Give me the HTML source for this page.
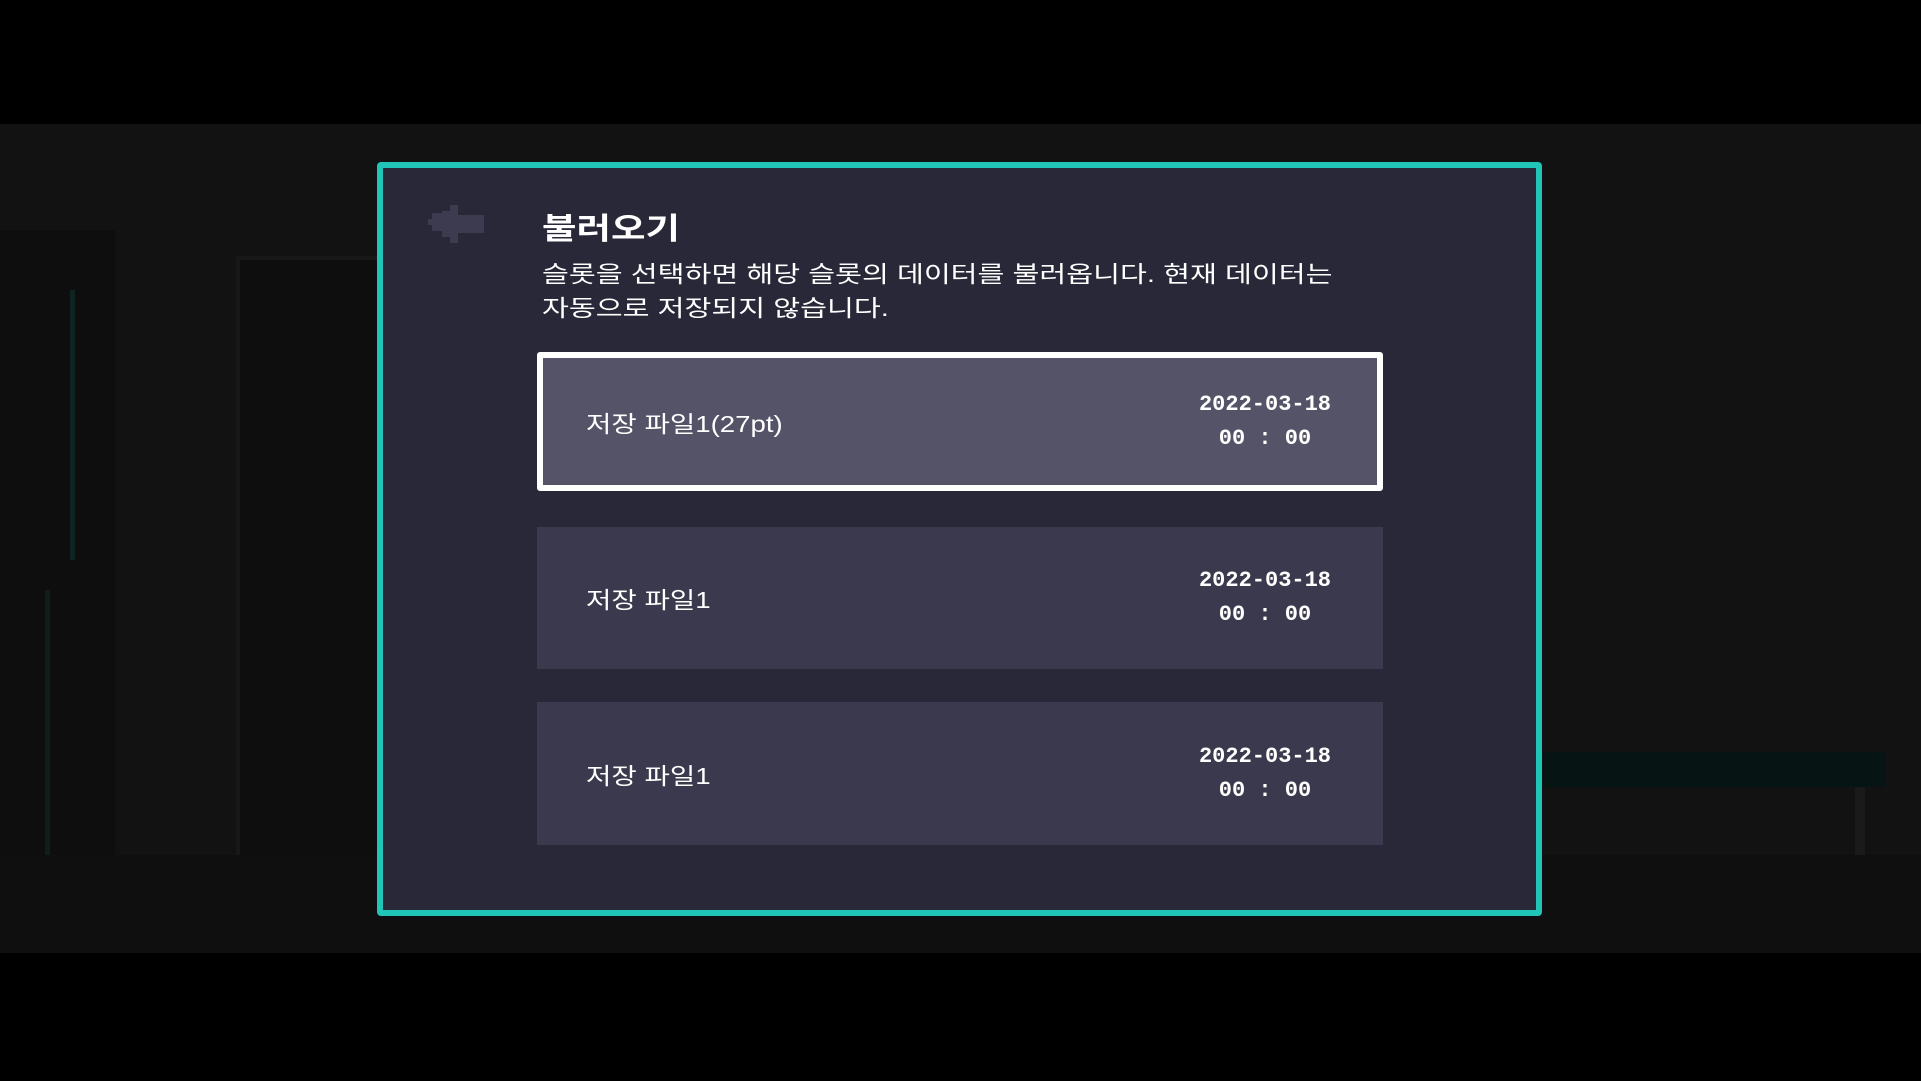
<!DOCTYPE html>
<html><head><meta charset="utf-8"><style>
*{margin:0;padding:0;box-sizing:border-box}
body{width:1921px;height:1081px;background:#000;position:relative;overflow:hidden;font-family:"Liberation Sans","Noto Sans CJK KR",sans-serif;color:#fff}
.a{position:absolute}
.sx{transform-origin:0 0;white-space:nowrap}
.slot{position:absolute;left:537px;width:846px;background:#3b394d}
.slot .n{position:absolute;left:49px;font-size:23px;top:50%;transform:translateY(-50%) scaleX(1.2);transform-origin:0 50%;white-space:nowrap}
.slot .d{position:absolute;left:638px;width:180px;text-align:center;font-size:22px;line-height:34px;top:50%;transform:translateY(-50%);font-family:"Liberation Mono","Noto Sans CJK KR",monospace;font-weight:bold;white-space:nowrap}
</style></head><body>
<div class="a" style="left:0;top:124px;width:1921px;height:829px;background:#121212"></div>
<div class="a" style="left:0;top:230px;width:115px;height:690px;background:#0e0e0e"></div>
<div class="a" style="left:70px;top:290px;width:5px;height:270px;background:#0d2420"></div>
<div class="a" style="left:45px;top:590px;width:5px;height:320px;background:#0d1f1c"></div>
<div class="a" style="left:236px;top:256px;width:150px;height:620px;background:#0e0e0e;border:4px solid #181818"></div>
<div class="a" style="left:1540px;top:752px;width:345px;height:35px;background:#061414"></div>
<div class="a" style="left:1855px;top:787px;width:10px;height:80px;background:#1a1a1a"></div>
<div class="a" style="left:0;top:855px;width:1921px;height:98px;background:#0f0f0f"></div>
<div class="a" style="left:377px;top:162px;width:1165px;height:754px;background:#282838;border:6px solid #20c5b8;border-radius:4px"></div>
<svg class="a" style="left:428px;top:205px" width="58" height="38" viewBox="0 0 58 38"><path d="M22 0h8v10h26v18H30v10h-8v-6h-8v-6H4v-6H0v-6h4v-6h10V6h8z" fill="#3d3b50"/></svg>
<div class="a sx" style="left:542px;top:204px;font-size:30px;font-weight:bold;transform:scaleX(1.25)">불러오기</div>
<div class="a sx" style="left:542px;top:257px;font-size:23px;line-height:34px;transform:scaleX(1.27)">슬롯을 선택하면 해당 슬롯의 데이터를 불러옵니다. 현재 데이터는<br>자동으로 저장되지 않습니다.</div>
<div class="slot" style="top:352px;height:139px;background:#555368;border:6px solid #fff;border-radius:3px"><div class="n" style="left:43px">저장 파일1(27pt)</div><div class="d" style="left:632px">2022-03-18<br>00 : 00</div></div>
<div class="slot" style="top:527px;height:142px"><div class="n">저장 파일1</div><div class="d">2022-03-18<br>00 : 00</div></div>
<div class="slot" style="top:702px;height:143px"><div class="n">저장 파일1</div><div class="d">2022-03-18<br>00 : 00</div></div>
</body></html>
